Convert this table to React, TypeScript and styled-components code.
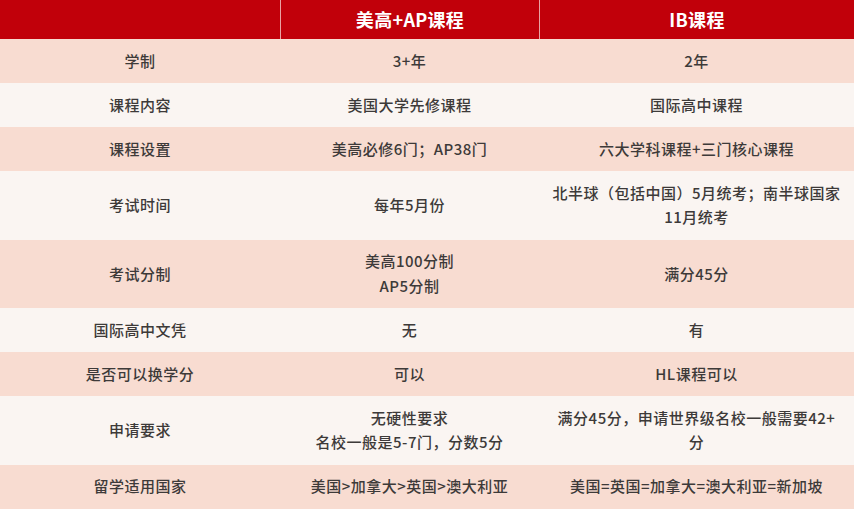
import { ReactElement } from 'react';
import styled, { createGlobalStyle } from 'styled-components';

const GlobalStyle = createGlobalStyle`
  body {
    margin: 0;
    background: #fff;
    font-family: "Noto Sans CJK SC", "Noto Sans", sans-serif;
  }
`;

interface RowData {
  label: string;
  ap: string[];
  ib: string[];
}

const rows: RowData[] = [
  { label: '学制', ap: ['3+年'], ib: ['2年'] },
  { label: '课程内容', ap: ['美国大学先修课程'], ib: ['国际高中课程'] },
  { label: '课程设置', ap: ['美高必修6门；AP38门'], ib: ['六大学科课程+三门核心课程'] },
  { label: '考试时间', ap: ['每年5月份'], ib: ['北半球（包括中国）5月统考；南半球国家', '11月统考'] },
  { label: '考试分制', ap: ['美高100分制', 'AP5分制'], ib: ['满分45分'] },
  { label: '国际高中文凭', ap: ['无'], ib: ['有'] },
  { label: '是否可以换学分', ap: ['可以'], ib: ['HL课程可以'] },
  { label: '申请要求', ap: ['无硬性要求', '名校一般是5-7门，分数5分'], ib: ['满分45分，申请世界级名校一般需要42+', '分'] },
  { label: '留学适用国家', ap: ['美国>加拿大>英国>澳大利亚'], ib: ['美国=英国=加拿大=澳大利亚=新加坡'] },
];

const Table = styled.div`
  width: 854px;
  display: flex;
  flex-direction: column;
`;

const HeaderRow = styled.div`
  display: grid;
  grid-template-columns: 280px 259px 315px;
  height: 39px;
  background: #c1000a;
`;

const HeaderCell = styled.div<{ $divider?: boolean }>`
  display: flex;
  align-items: center;
  justify-content: center;
  padding-bottom: 2px;
  color: #fff;
  font-size: 18px;
  font-weight: 700;
  letter-spacing: 0.3px;
  border-left: ${(p) => (p.$divider ? '1.5px solid #e9a3a3' : 'none')};
`;

const Row = styled.div<{ $shaded: boolean }>`
  display: grid;
  grid-template-columns: 280px 259px 315px;
  background: ${(p) => (p.$shaded ? '#f8dcd1' : '#faf5f2')};
`;

const Cell = styled.div`
  display: flex;
  flex-direction: column;
  align-items: center;
  justify-content: center;
  padding: 9.75px 4px;
  color: #3d3a39;
  font-size: 15px;
  font-weight: 500;
  letter-spacing: 0.5px;
  line-height: 24.5px;
  text-align: center;
  white-space: nowrap;
`;

export default function App(): ReactElement {
  return (
    <>
      <GlobalStyle />
      <Table>
        <HeaderRow>
          <HeaderCell />
          <HeaderCell $divider>美高+AP课程</HeaderCell>
          <HeaderCell $divider>IB课程</HeaderCell>
        </HeaderRow>
        { rows.map((row, i) => (
          <Row key={ row.label } $shaded={ i % 2 === 0 }>
            <Cell>{ row.label }</Cell>
            <Cell>{ row.ap.map((line) => <span key={ line }>{ line }</span>) }</Cell>
            <Cell>{ row.ib.map((line) => <span key={ line }>{ line }</span>) }</Cell>
          </Row>
        )) }
      </Table>
    </>
  );
}
